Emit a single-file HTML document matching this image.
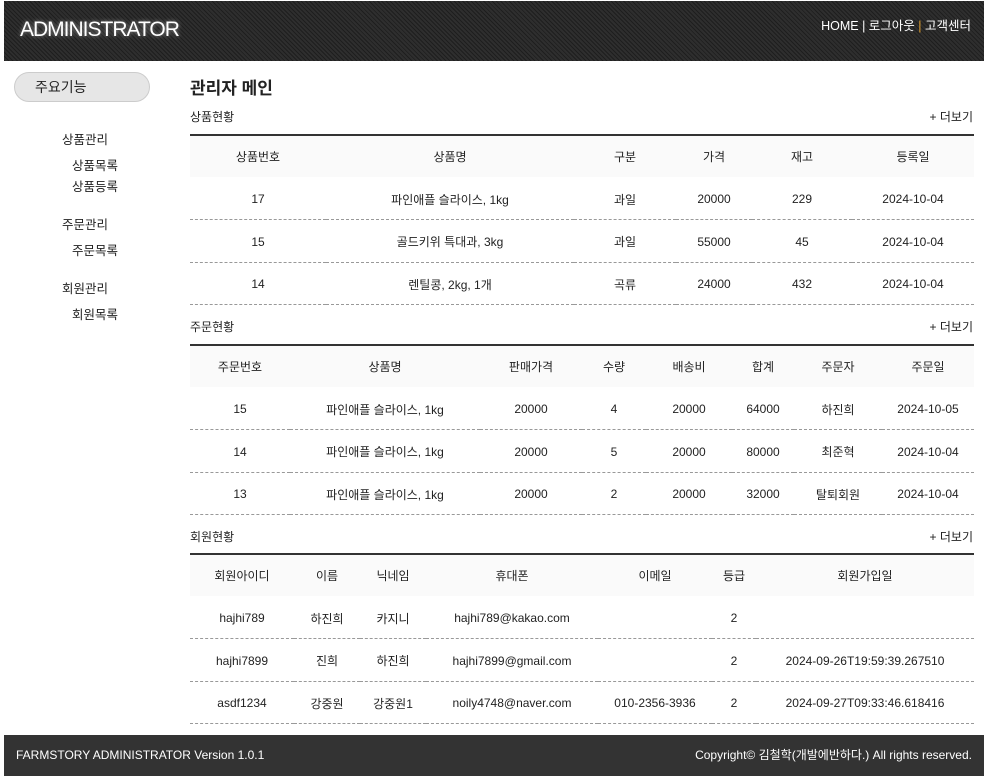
<!DOCTYPE html>
<html><head><meta charset="utf-8">
<style>
*{margin:0;padding:0;box-sizing:border-box}
body{width:991px;height:784px;background:#fff;font-family:"Liberation Sans","Noto Sans CJK KR",sans-serif;color:#222;font-size:12px;position:relative;overflow:hidden}
#hd{position:absolute;left:4px;top:1px;width:980px;height:60px;background:#262626;background-image:repeating-linear-gradient(45deg,#1e1e1e 0 1px,#2e2e2e 1px 3px)}
#hd h1{position:absolute;left:16px;top:17px;font-size:21px;font-weight:normal;color:#fff;letter-spacing:-1px;text-shadow:0 0 4px rgba(255,255,255,.5)}
#hd .nav{position:absolute;right:13px;top:14px;font-size:12.5px;color:#fff}
#hd .nav .o{color:#e0a030}
.pill{position:absolute;left:14px;top:72px;width:136px;height:30px;border:1px solid #ccc;border-radius:15px;background:#e6e6e6;font-size:14px;line-height:28px;padding-left:20px;color:#222}
.m{position:absolute;font-size:12.5px;color:#222}
h2{position:absolute;left:190px;top:74px;font-size:17px;font-weight:bold;color:#222}
.lab{position:absolute;left:190px;font-size:12px}
.more{position:absolute;right:18px;font-size:12px}
table{position:absolute;left:190px;width:784px;border-collapse:collapse;table-layout:fixed;border-top:2px solid #333}
th{height:42px;background:#fafafa;font-weight:normal;text-align:center;font-size:12px}
td{height:42.5px;text-align:center;border-bottom:1px dashed #999;font-size:12px;padding-top:2px}
#ft{position:absolute;left:4px;top:735px;width:980px;height:41px;background:#333;color:#fff;font-size:12px;line-height:41px}
#ft .l{position:absolute;left:12px}
#ft .r{position:absolute;right:12px}
</style></head><body>
<div id="hd"><h1>ADMINISTRATOR</h1><div class="nav">HOME | 로그아웃 <span class="o">|</span> 고객센터</div></div>
<div class="pill">주요기능</div>
<div class="m" style="left:62px;top:129px">상품관리</div>
<div class="m" style="left:72px;top:155px">상품목록</div>
<div class="m" style="left:72px;top:176px">상품등록</div>
<div class="m" style="left:62px;top:214px">주문관리</div>
<div class="m" style="left:72px;top:240px">주문목록</div>
<div class="m" style="left:62px;top:278px">회원관리</div>
<div class="m" style="left:72px;top:304px">회원목록</div>
<h2>관리자 메인</h2>

<div class="lab" style="top:108px">상품현황</div><div class="more" style="top:108px">+ 더보기</div>
<table style="top:134px">
<colgroup><col style="width:136px"><col style="width:248px"><col style="width:102px"><col style="width:76px"><col style="width:100px"><col></colgroup>
<tr><th>상품번호</th><th>상품명</th><th>구분</th><th>가격</th><th>재고</th><th>등록일</th></tr>
<tr><td>17</td><td>파인애플 슬라이스, 1kg</td><td>과일</td><td>20000</td><td>229</td><td>2024-10-04</td></tr>
<tr><td>15</td><td>골드키위 특대과, 3kg</td><td>과일</td><td>55000</td><td>45</td><td>2024-10-04</td></tr>
<tr><td>14</td><td>렌틸콩, 2kg, 1개</td><td>곡류</td><td>24000</td><td>432</td><td>2024-10-04</td></tr>
</table>

<div class="lab" style="top:318px">주문현황</div><div class="more" style="top:318px">+ 더보기</div>
<table style="top:344px">
<colgroup><col style="width:100px"><col style="width:190px"><col style="width:102px"><col style="width:64px"><col style="width:86px"><col style="width:62px"><col style="width:88px"><col></colgroup>
<tr><th>주문번호</th><th>상품명</th><th>판매가격</th><th>수량</th><th>배송비</th><th>합계</th><th>주문자</th><th>주문일</th></tr>
<tr><td>15</td><td>파인애플 슬라이스, 1kg</td><td>20000</td><td>4</td><td>20000</td><td>64000</td><td>하진희</td><td>2024-10-05</td></tr>
<tr><td>14</td><td>파인애플 슬라이스, 1kg</td><td>20000</td><td>5</td><td>20000</td><td>80000</td><td>최준혁</td><td>2024-10-04</td></tr>
<tr><td>13</td><td>파인애플 슬라이스, 1kg</td><td>20000</td><td>2</td><td>20000</td><td>32000</td><td>탈퇴회원</td><td>2024-10-04</td></tr>
</table>

<div class="lab" style="top:528px">회원현황</div><div class="more" style="top:528px">+ 더보기</div>
<table style="top:553px">
<colgroup><col style="width:104px"><col style="width:66px"><col style="width:66px"><col style="width:172px"><col style="width:114px"><col style="width:44px"><col></colgroup>
<tr><th>회원아이디</th><th>이름</th><th>닉네임</th><th>휴대폰</th><th>이메일</th><th>등급</th><th>회원가입일</th></tr>
<tr><td>hajhi789</td><td>하진희</td><td>카지니</td><td>hajhi789@kakao.com</td><td></td><td>2</td><td></td></tr>
<tr><td>hajhi7899</td><td>진희</td><td>하진희</td><td>hajhi7899@gmail.com</td><td></td><td>2</td><td>2024-09-26T19:59:39.267510</td></tr>
<tr><td>asdf1234</td><td>강중원</td><td>강중원1</td><td>noily4748@naver.com</td><td>010-2356-3936</td><td>2</td><td>2024-09-27T09:33:46.618416</td></tr>
</table>

<div id="ft"><span class="l">FARMSTORY ADMINISTRATOR Version 1.0.1</span><span class="r">Copyright© 김철학(개발에반하다.) All rights reserved.</span></div>
</body></html>
